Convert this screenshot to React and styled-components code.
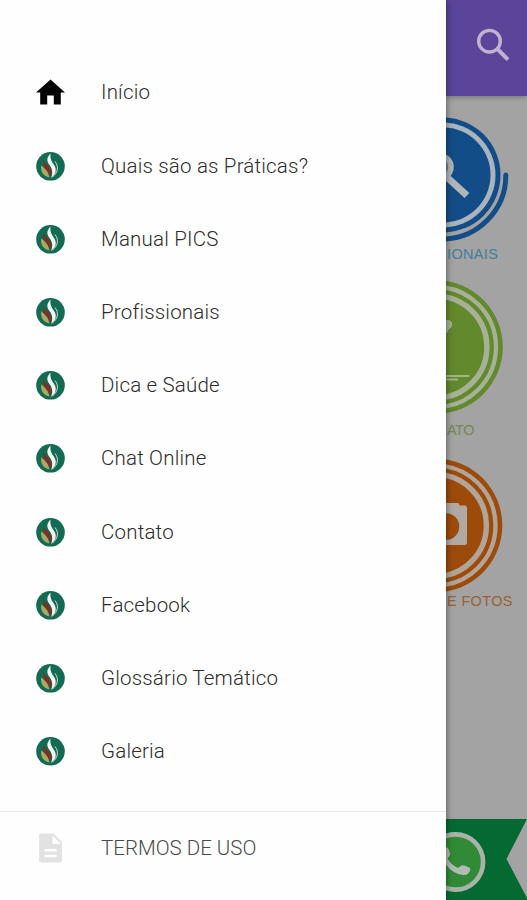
import React from 'react';
import styled, { createGlobalStyle } from 'styled-components';

const GlobalStyle = createGlobalStyle`
  * { box-sizing: border-box; }
  body { margin: 0; font-family: Roboto, 'Liberation Sans', sans-serif; }
  p { margin: 0; }
  svg { display: block; flex-shrink: 0; }
`;

/* ── SHELL ── */
const Screen = styled.div`
  display: flex;
  width: 527px;
  height: 900px;
  overflow: hidden;
  background: #a3a3a3;
`;

/* ── DRAWER ── */
const Drawer = styled.aside`
  position: relative;
  z-index: 2;
  width: 446px;
  flex-shrink: 0;
  display: flex;
  flex-direction: column;
  background: #fefefe;
  box-shadow: 0 0 7px rgba(0,0,0,.5);
`;

const Menu = styled.nav`
  height: 812px;
  padding-top: 55.8px;
  border-bottom: 1px solid #e9e9e9;
`;

const MenuItem = styled.a`
  display: flex;
  align-items: center;
  gap: 35px;
  height: 73.2px;
  padding-left: 35px;
  color: #2c2c2c;
  font-size: 20.5px;
  font-weight: 300;
  letter-spacing: .19px;
  white-space: nowrap;
`;

const FooterItem = styled(MenuItem)`
  height: 72px;
  color: #4a4a4a;
  letter-spacing: 0;
`;

/* ── PAGE BEHIND ── */
const Page = styled.main`
  width: 81px;
  display: flex;
  flex-direction: column;
  overflow: hidden;
`;

const AppBar = styled.header`
  height: 96px;
  flex-shrink: 0;
  display: flex;
  justify-content: flex-end;
  padding: 25px 13px 0 0;
  background: #5b459a;
  box-shadow: 0 1px 5px rgba(0,0,0,.3);
`;

const Tiles = styled.section`
  flex: 1;
  display: flex;
  flex-direction: column;
  padding-top: 14px;
`;

const Tile = styled.div`
  height: ${({ $height }) => $height}px;
  display: flex;
  flex-direction: column;
`;

const TileLabel = styled.p`
  margin-top: ${({ $gap }) => $gap}px;
  padding-left: 1px;
  font: 14.5px/18px 'Liberation Sans', Arial, sans-serif;
  letter-spacing: ${({ $spacing = 0 }) => $spacing}px;
  white-space: nowrap;
  color: ${({ $color }) => $color};
`;

const ChatBar = styled.footer`
  height: 81px;
  flex-shrink: 0;
`;

/* ── ICONS ── */
const HomeIcon = () => (
  <svg width="31" height="32" viewBox="0 0 31 32">
    <path d="M15.5 3.5 30 16.5h-4.2V28.500h-7v-9h-6.6v9h-7V16.5H1z" fill="#050505" />
  </svg>
);

const FlameIcon = () => (
  <svg width="31" height="32" viewBox="0 0 31 32">
    <circle cx="15.5" cy="16.3" r="14.3" fill="#146b53" />
    <path d="M6.500 15c-1.500 5.500 1 11 8 12.500-1-3.500-1.500-5.500-3.500-8C9 17.500 7.500 17 6.500 15z" fill="#a9aa62" />
    <path d="M8.500 10.500c-1 6 1.500 8.500 4 11 1.500 1.700 2.300 3.500 2.800 6.300 2.200-5.500 1-9-2-12-2-2-3.800-3-4.800-5.300z" fill="#7d3026" />
    <path d="M15.500 3.500c-3.800 4-4.200 7.500-1 11.500 3.200 4.300 3.500 8 1.500 13 5.500-4.500 6-9 2.800-13.500-2.600-3.600-3.800-6-3.300-11z" fill="#f3f8f5" />
    <path d="M20 11.500c4 5 3 11-2.500 15.500" fill="none" stroke="#d0e0d8" strokeWidth="1" />
  </svg>
);

const DocIcon = () => (
  <svg width="31" height="32" viewBox="0 0 31 32">
    <path d="M6.500 1.500h12l8.500 8.500v18a2.500 2.500 0 0 1-2.500 2.500h-18A2.500 2.500 0 0 1 4 28V4a2.500 2.500 0 0 1 2.500-2.500z" fill="#e2e2e2" />
    <path d="M17.500 3.500V12H26z" fill="#fff" />
    <path d="M9.500 18.200h12M9.500 24h12" stroke="#fff" strokeWidth="2.500" />
  </svg>
);

const SearchIcon = () => (
  <svg width="38" height="40" viewBox="0 0 38 40">
    <circle cx="13.500" cy="16.200" r="10.800" fill="none" stroke="#c0b3cf" strokeWidth="3.400" />
    <path d="m21 23.700 11 11" stroke="#c0b3cf" strokeWidth="4" />
  </svg>
);

const Professionals = () => (
  <svg width="81" height="134" viewBox="446 110 81 134">
    <circle cx="443" cy="175" r="57.500" fill="#124d87" />
    <circle cx="443" cy="175" r="52.500" fill="#a9b4be" />
    <circle cx="443" cy="175" r="47.500" fill="#124d87" />
    <path d="M505.800 175A63.500 63.500 0 0 1 442 239" fill="none" stroke="#124d87" strokeWidth="5" strokeLinecap="round" />
    <circle cx="440" cy="167" r="11" fill="#6c8299" stroke="#b0b5bb" strokeWidth="5.500" />
    <path d="m444 174.500 23 21" stroke="#b0b5bb" strokeWidth="7" />
  </svg>
);

const Rings = ({ cx, cy, color, light }) => (
  <>
    <circle cx={cx} cy={cy} r="66.800" fill={color} />
    <circle cx={cx} cy={cy} r="60" fill="none" stroke={light} strokeWidth="4.300" />
    <circle cx={cx} cy={cy} r="50.900" fill="none" stroke={light} strokeWidth="5.400" />
  </>
);

const Contact = () => (
  <svg width="81" height="136" viewBox="446 279 81 136">
    <Rings cx="436" cy="347" color="#62892b" light="#a6b198" />
    <path d="M444 321q5-3 8 1.500 1 4.500-3 6.500l-2 4-3-1z" fill="#a6b198" />
    <path d="M446 376h23.500M446 379.500h12" stroke="#a3b48a" strokeWidth="1.800" />
  </svg>
);

const Photos = () => (
  <svg width="81" height="134" viewBox="446 459 81 134">
    <Rings cx="435.500" cy="525.500" color="#9c4b0b" light="#b1a59a" />
    <path d="M440 503h18.500l1 2.500h5q2.500 0 2.500 2.500v34.500q0 2.500-2.500 2.500H440z" fill="#b1aaa4" />
    <circle cx="446" cy="526.500" r="13.300" fill="#9c4b0b" />
  </svg>
);

const ChatBanner = () => (
  <svg width="81" height="81" viewBox="446 819 81 81">
    <path d="M446 819h81l-20.500 40L527 898v2h-81z" fill="#056a31" />
    <circle cx="455.500" cy="862" r="27.600" fill="#318b36" stroke="#a9b3aa" strokeWidth="4.600" />
    <path d="M443 848q4-3 6 2l1 4q0 2-2.500 4.500 4 7 10.500 9.500l3.500-2.500q2-.8 8 2.300 1.500 1 .2 3.600-2 4-7 3.600Q450 873 443 860z" fill="#b1bbb2" />
  </svg>
);

const MENU_ITEMS = [
  'Quais são as Práticas?',
  'Manual PICS',
  'Profissionais',
  'Dica e Saúde',
  'Chat Online',
  'Contato',
  'Facebook',
  'Glossário Temático',
  'Galeria',
];

export default function App() {
  return (
    <>
      <GlobalStyle />
      <Screen>
        <Drawer>
          <Menu>
            <MenuItem><HomeIcon />Início</MenuItem>
            {MENU_ITEMS.map(label => (
              <MenuItem key={label}><FlameIcon />{label}</MenuItem>
            ))}
          </Menu>
          <FooterItem><DocIcon />TERMOS DE USO</FooterItem>
        </Drawer>

        <Page>
          <AppBar><SearchIcon /></AppBar>
          <Tiles>
            <Tile $height={169}>
              <Professionals />
              <TileLabel $gap={1} $spacing={0.35} $color="#427f9f">IONAIS</TileLabel>
            </Tile>
            <Tile $height={180}>
              <Contact />
              <TileLabel $gap={6} $spacing={-0.5} $color="#77884f">ATO</TileLabel>
            </Tile>
            <Tile $height={160}>
              <Photos />
              <TileLabel $gap={-1} $spacing={0.35} $color="#9a6135">E FOTOS</TileLabel>
            </Tile>
          </Tiles>
          <ChatBar><ChatBanner /></ChatBar>
        </Page>
      </Screen>
    </>
  );
}
